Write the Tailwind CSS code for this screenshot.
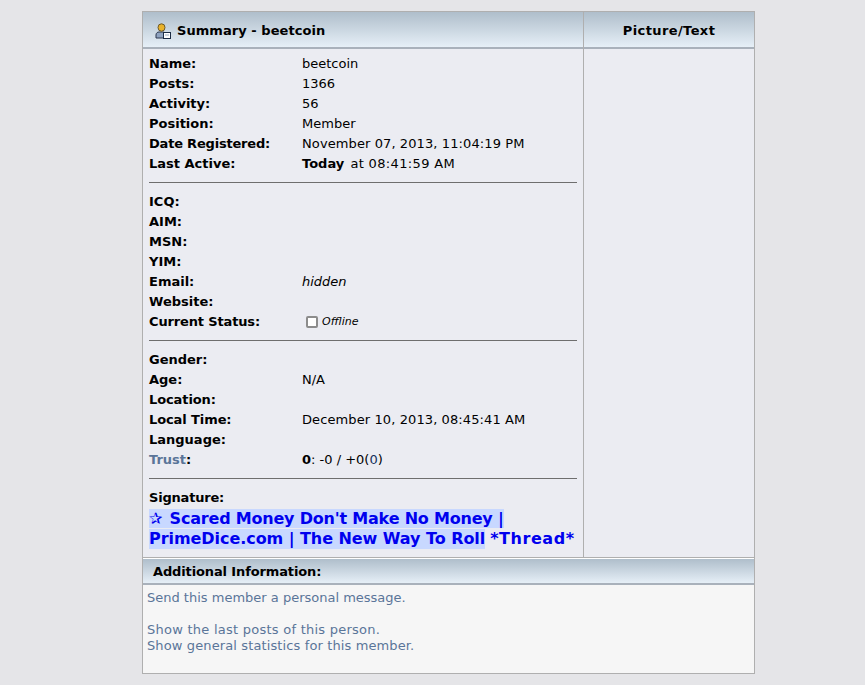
<!DOCTYPE html>
<html lang="en">
<head>
    <meta charset="UTF-8">
    <title>View Profile</title>
    <script src="https://cdn.jsdelivr.net/npm/@tailwindcss/browser@4"></script>
</head>
<body class="bg-[#e5e5e8] h-[685px] overflow-hidden font-['DejaVu_Sans',sans-serif] text-[13px] text-black">
    <div class="ml-[142px] mt-[11px] w-[613px] h-[663px] border border-[#afafaf] flex flex-col">
        <!-- top table -->
        <div class="flex h-[546px] border-b border-[#afafaf]">
            <div class="w-[441px] border-r border-[#afafaf] flex flex-col">
                <div class="h-[37px] pt-[2px] border-b-2 border-[#a9b1bb] bg-gradient-to-b from-[#afbecb] to-[#e6eff7] flex items-center pl-[12px] gap-[6px] font-bold tracking-[0.05px]">
                    <svg width="16" height="16" viewBox="0 0 16 16">
                        <path d="M1 15v-3c0-2 1.500-3 3-3h4c1.500 0 2.500 1 2.500 2v4z" fill="#8fa3c0" stroke="#2c3850"/>
                        <ellipse cx="6.500" cy="4.500" rx="3.500" ry="3.700" fill="#e9b22a" stroke="#6d5a2a"/>
                        <rect x="8.500" y="9.500" width="7" height="6" fill="#fff" stroke="#1c2c44"/>
                        <path d="M10.500 11.500h1v1h-1zM12.500 11.500h1v1h-1z" fill="#3a5a80"/>
                    </svg>
                    <span>Summary - beetcoin</span>
                </div>
                <div class="flex-1 bg-[#ebecf2] px-[6px] pt-[5px]">
                    <div class="grid grid-cols-[153px_1fr] leading-[20px]">
                        <b>Name:</b><span>beetcoin</span>
                        <b>Posts:</b><span>1366</span>
                        <b>Activity:</b><span>56</span>
                        <b>Position:</b><span>Member</span>
                        <b class="tracking-[-0.2px]">Date Registered:</b><span class="tracking-[0.1px]">November 07, 2013, 11:04:19 PM</span>
                        <b>Last Active:</b><span><b>Today</b> <span class="tracking-[0.35px] ml-[2px]">at 08:41:59 AM</span></span>
                    </div>
                    <div class="h-px bg-[#6e6e6e] mt-[8px] mb-[9px]"></div>
                    <div class="grid grid-cols-[153px_1fr] leading-[20px]">
                        <b>ICQ:</b><span></span>
                        <b>AIM:</b><span></span>
                        <b>MSN:</b><span></span>
                        <b>YIM:</b><span></span>
                        <b>Email:</b><i>hidden</i>
                        <b>Website:</b><span></span>
                        <b class="tracking-[-0.15px]">Current Status:</b>
                        <span class="flex items-center pl-[4px] gap-[4px] italic text-[11px]">
                            <span class="w-[12px] h-[12px] border-2 border-[#8c8c8c] rounded-[2px] bg-white"></span>Offline
                        </span>
                    </div>
                    <div class="h-px bg-[#6e6e6e] mt-[8px] mb-[9px]"></div>
                    <div class="grid grid-cols-[153px_1fr] leading-[20px]">
                        <b>Gender:</b><span></span>
                        <b>Age:</b><span>N/A</span>
                        <b class="tracking-[-0.1px]">Location:</b><span></span>
                        <b class="tracking-[-0.1px]">Local Time:</b><span class="tracking-[0.1px]">December 10, 2013, 08:45:41 AM</span>
                        <b>Language:</b><span></span>
                        <b><a class="text-[#5a7599]">Trust</a>:</b><span><b>0</b>: -0 / +0(<a class="text-[#14305c]">0</a>)</span>
                    </div>
                    <div class="h-px bg-[#6e6e6e] mt-[8px] mb-[9px]"></div>
                    <div class="leading-[20px] font-bold tracking-[-0.2px]">Signature:</div>
                    <div class="text-[16px] leading-[20px] font-bold text-[#0000ee] mt-[1px]">
                        <div class="tracking-[-0.2px]"><span class="bg-[#c8d8ff]"><span class="mr-[2px]">✰</span> Scared Money Don't Make No Money |</span></div>
                        <div class="flex whitespace-pre"><span class="bg-[#c8d8ff] tracking-[-0.06px]">PrimeDice.com | The New Way To Roll</span><span class="ml-[5px] tracking-[0.55px]">*Thread*</span></div>
                    </div>
                </div>
            </div>
            <div class="flex-1 flex flex-col">
                <div class="h-[37px] pt-[2px] border-b-2 border-[#a9b1bb] bg-gradient-to-b from-[#afbecb] to-[#e6eff7] flex items-center justify-center font-bold tracking-[0.4px]">Picture/Text</div>
                <div class="flex-1 bg-[#ebecf2]"></div>
            </div>
        </div>
        <!-- additional info -->
        <div class="h-[27px] pt-[2px] border-t border-white border-b-2 border-b-[#a9b1bb] bg-gradient-to-b from-[#afbecb] to-[#e6eff7] flex items-center pl-[10px] font-bold tracking-[-0.13px]">Additional Information:</div>
        <div class="flex-1 bg-[#f6f6f6] pl-[4px] pt-[5px] leading-[16px] text-[#5a7599]">
            <div>Send this member a personal message.</div>
            <div class="mt-[16px] tracking-[0.25px]">Show the last posts of this person.</div>
            <div class="tracking-[0.12px]">Show general statistics for this member.</div>
        </div>
    </div>
</body>
</html>
